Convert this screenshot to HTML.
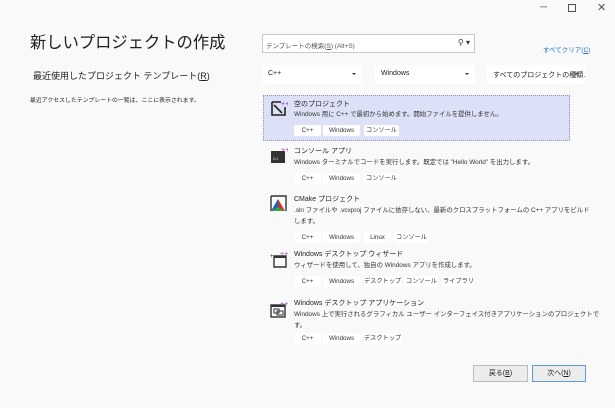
<!DOCTYPE html>
<html><head><meta charset="utf-8"><style>
*{margin:0;padding:0;box-sizing:border-box}
body{width:615px;height:408px;background:#f9f9f9;font-family:"Liberation Sans","Noto Sans CJK JP",sans-serif;color:#1e1e1e;position:relative;overflow:hidden}
.a{position:absolute;white-space:nowrap}
.t{font-size:16.3px;left:30px;top:29px;color:#1e1e1e}
.s{font-size:9px;left:33px;top:69px}
.sm{font-size:5.9px;left:30px;top:95px}
.box{position:absolute;background:#fff;height:19px;white-space:nowrap;overflow:hidden}
.dd{font-size:7px;padding:5px 0 0 6px}
.dd:after{content:"";position:absolute;right:6px;top:8px;border:2px solid transparent;border-top:2px solid #333}
.it{position:absolute;left:263px;width:307px}
.ti{position:absolute;left:31px;font-size:7px;white-space:nowrap}
.de{position:absolute;left:31px;font-size:6.4px;color:#333;line-height:11px;white-space:nowrap}
.tg{position:absolute;font-size:6.2px;background:#fff;height:11px;line-height:11px;text-align:center;color:#333;border-radius:2px;white-space:nowrap}
.ic{position:absolute;left:7px;width:18px;height:18px}
.btn{position:absolute;top:365px;height:17px;font-size:7px;text-align:center;line-height:15px;background:#ececec;border:1px solid #bbb}
</style></head><body>
<div class="a" style="left:540px;top:2px;font-size:10px;color:#555">─</div>
<div class="a" style="left:568px;top:4px;width:8px;height:8px;border:1px solid #555"></div>
<div class="a" style="left:597px;top:1px;font-size:11px;color:#555">✕</div>
<div class="a t">新しいプロジェクトの作成</div>
<div class="a s">最近使用したプロジェクト テンプレート(<u>R</u>)</div>
<div class="a sm">最近アクセスしたテンプレートの一覧は、ここに表示されます。</div>
<div class="box" style="left:262px;top:34px;width:213px;border:1px solid #c8c8c8;font-size:6.5px;color:#555;padding:5px 0 0 3px">テンプレートの検索(<u>S</u>) (Alt+S)<span style="position:absolute;right:4px;top:3px;font-size:8px;color:#333">⚲ ▾</span></div>
<div class="a" style="left:543px;top:44px;font-size:6.5px;color:#1a6fc9">すべてクリア(<u>C</u>)</div>
<div class="box dd" style="left:262px;top:65px;width:100px">C++</div>
<div class="box dd" style="left:375px;top:65px;width:100px">Windows</div>
<div class="box dd" style="left:487px;top:65px;width:98px">すべてのプロジェクトの種類...</div>

<div class="it" style="top:95px;height:46px;background:#dde1f7;border:1px dotted #8a93b8"></div>
<div class="it" style="top:95px">
<svg class="ic" viewBox="0 0 18 18" style="top:4px"><path d="M2 3h9M2 3v13h13V8" fill="none" stroke="#222" stroke-width="1.6"/><path d="M4 6l8 8" stroke="#222" stroke-width="1.6"/><text x="11" y="7" font-size="7" fill="#9b3fb5" font-family="Liberation Sans">++</text></svg>
<div class="ti" style="top:4px">空のプロジェクト</div>
<div class="de" style="top:14px">Windows 用に C++ で最初から始めます。開始ファイルを提供しません。</div>
<div class="tg" style="left:31px;top:30px;width:27px">C++</div><div class="tg" style="left:60px;top:30px;width:37px">Windows</div><div class="tg" style="left:101px;top:30px;width:35px">コンソール</div>
</div>
<div class="it" style="top:144px">
<svg class="ic" viewBox="0 0 18 18" style="top:3px"><rect x="1" y="4" width="14" height="12" fill="#333"/><text x="3" y="13" font-size="4" fill="#fff" font-family="Liberation Sans">C:\</text><text x="11" y="5" font-size="7" fill="#9b3fb5" font-family="Liberation Sans">++</text></svg>
<div class="ti" style="top:2px">コンソール アプリ</div>
<div class="de" style="top:13px">Windows ターミナルでコードを実行します。既定では "Hello World" を出力します。</div>
<div class="tg" style="left:31px;top:29px;width:27px">C++</div><div class="tg" style="left:60px;top:29px;width:37px">Windows</div><div class="tg" style="left:101px;top:29px;width:35px">コンソール</div>
</div>
<div class="it" style="top:192px">
<svg class="ic" viewBox="0 0 18 18" style="top:3px"><path d="M1 1h15v15" fill="none" stroke="#333" stroke-width="1.4"/><path d="M1 1v15" stroke="#333" stroke-width="1.4"/><path d="M8 4L1 16h7z" fill="#1f5fbf"/><path d="M8 4l7 12H8z" fill="#d42b2b"/><path d="M1 16l7-4 7 4z" fill="#3ca342"/></svg>
<div class="ti" style="top:2px">CMake プロジェクト</div>
<div class="de" style="top:13px">.sln ファイルや .vcxproj ファイルに依存しない、最新のクロスプラットフォームの C++ アプリをビルド<br>します。</div>
<div class="tg" style="left:31px;top:40px;width:27px">C++</div><div class="tg" style="left:60px;top:40px;width:37px">Windows</div><div class="tg" style="left:101px;top:40px;width:27px">Linux</div><div class="tg" style="left:131px;top:40px;width:35px">コンソール</div>
</div>
<div class="it" style="top:248px">
<svg class="ic" viewBox="0 0 18 18" style="top:2px"><path d="M4 6h12v11H4z" fill="none" stroke="#333" stroke-width="1.4"/><rect x="4" y="6" width="12" height="2" fill="#333"/><text x="0" y="8" font-size="6" fill="#333">+</text><text x="10" y="6" font-size="7" fill="#9b3fb5" font-family="Liberation Sans">++</text></svg>
<div class="ti" style="top:1px">Windows デスクトップ ウィザード</div>
<div class="de" style="top:12px">ウィザードを使用して、独自の Windows アプリを作成します。</div>
<div class="tg" style="left:31px;top:28px;width:27px">C++</div><div class="tg" style="left:60px;top:28px;width:37px">Windows</div><div class="tg" style="left:101px;top:28px;width:37px">デスクトップ</div><div class="tg" style="left:141px;top:28px;width:35px">コンソール</div><div class="tg" style="left:180px;top:28px;width:30px">ライブラリ</div>
</div>
<div class="it" style="top:297px">
<svg class="ic" viewBox="0 0 18 18" style="top:4px"><rect x="1" y="4" width="14" height="12" fill="none" stroke="#333" stroke-width="1.4"/><rect x="1" y="4" width="14" height="2" fill="#333"/><rect x="4" y="8" width="5" height="4" fill="none" stroke="#333"/><rect x="7" y="10" width="6" height="4" fill="none" stroke="#333"/><text x="10" y="5" font-size="7" fill="#9b3fb5" font-family="Liberation Sans">++</text></svg>
<div class="ti" style="top:1px">Windows デスクトップ アプリケーション</div>
<div class="de" style="top:12px">Windows 上で実行されるグラフィカル ユーザー インターフェイス付きアプリケーションのプロジェクトで<br>す。</div>
<div class="tg" style="left:31px;top:36px;width:27px">C++</div><div class="tg" style="left:60px;top:36px;width:37px">Windows</div><div class="tg" style="left:101px;top:36px;width:37px">デスクトップ</div>
</div>
<div class="btn" style="left:473px;width:55px">戻る(<u>B</u>)</div>
<div class="btn" style="left:532px;width:54px;border-color:#5a9ee0">次へ(<u>N</u>)</div>
</body></html>
